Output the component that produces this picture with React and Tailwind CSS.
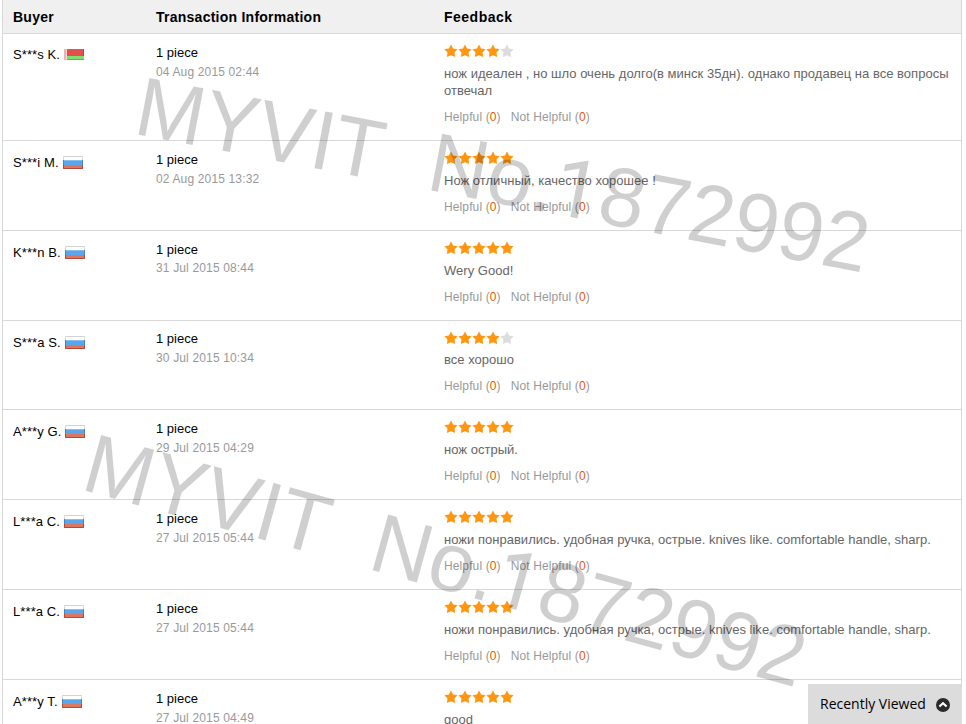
const REVIEWS = [
  { buyer: 'S***s K.', flag: 'by', date: '04 Aug 2015 02:44', stars: 4, lines: ['нож идеален , но шло очень долго(в минск 35дн). однако продавец на все вопросы', 'отвечал'], height: 'h-[107px]', buyerTop: 'mt-[11px]' },
  { buyer: 'S***i M.', flag: 'ru', date: '02 Aug 2015 13:32', stars: 5, lines: ['Нож отличный, качество хорошее !'] },
  { buyer: 'K***n B.', flag: 'ru', date: '31 Jul 2015 08:44', stars: 5, lines: ['Wery Good!'], dateLeading: 'leading-[18px]' },
  { buyer: 'S***a S.', flag: 'ru', date: '30 Jul 2015 10:34', stars: 4, lines: ['все хорошо'], height: 'h-[89px]', tight: true },
  { buyer: 'A***y G.', flag: 'ru', date: '29 Jul 2015 04:29', stars: 5, lines: ['нож острый.'] },
  { buyer: 'L***a C.', flag: 'ru', date: '27 Jul 2015 05:44', stars: 5, lines: ['ножи понравились. удобная ручка, острые. knives like. comfortable handle, sharp.'] },
  { buyer: 'L***a C.', flag: 'ru', date: '27 Jul 2015 05:44', stars: 5, lines: ['ножи понравились. удобная ручка, острые. knives like. comfortable handle, sharp.'] },
  { buyer: 'A***y T.', flag: 'ru', date: '27 Jul 2015 04:49', stars: 5, lines: ['good'] },
];

function Flag({ code }) {
  if (code === 'by') {
    return (
      <svg width="20" height="11" viewBox="0 0 20 11" className="block">
        <rect width="20" height="11" fill="#e0504e" />
        <rect width="20" height="1" fill="#c8605c" />
        <rect y="7" width="20" height="4" fill="#7fe06c" />
        <rect y="10" width="20" height="1" fill="#69ad50" />
        <rect width="3" height="11" fill="#f3dcda" />
        <path d="M1 0V11" stroke="#e58a87" strokeWidth="1" />
        <path d="M19.5 0V7" stroke="#b8453f" />
      </svg>
    );
  }
  return (
    <svg width="20" height="13" viewBox="0 0 20 13" className="block">
      <rect width="20" height="13" fill="#fdfdfd" />
      <rect y="4" width="20" height="5" fill="#5ba5ea" />
      <rect y="4" width="20" height="1" fill="#85c0f2" />
      <rect y="9" width="20" height="4" fill="#dd755f" />
      <path d="M0 .5H20" stroke="#d3d3d3" />
      <path d="M.5 0V4M19.5 0V4" stroke="#dcdcdc" />
      <path d="M.5 4V9M19.5 4V9" stroke="#4683c4" />
      <path d="M.5 9V12.5H19.5V9" fill="none" stroke="#b04a3a" />
    </svg>
  );
}

function Stars({ count }) {
  return (
    <div className="flex h-[14px]">
      {[0, 1, 2, 3, 4].map((i) => (
        <svg key={i} width="14" height="14" viewBox="0 0 14 14">
          <path
            d="M7 .6 9.1 4.6 13.6 5.2 10.5 8.4 11.1 13 7 11.2 2.9 13 3.5 8.4.4 5.2 4.9 4.6Z"
            fill={i < count ? '#ff9610' : '#dcdcdc'}
          />
        </svg>
      ))}
    </div>
  );
}

function Review({ review }) {
  return (
    <div className={`flex shrink-0 border-b border-[#d8d8d8] ${review.height || 'h-[90px]'}`}>
      <div className={`flex h-[19px] w-[143px] items-center gap-[4px] pl-[10px] text-[13px] tracking-[0.1px] text-black ${review.buyerTop || 'mt-[12px]'}`}>
        <span>{review.buyer}</span>
        <Flag code={review.flag} />
      </div>
      <div className={`w-[288px] pl-[10px] ${review.tight ? 'pt-[8px]' : 'pt-[9px]'}`}>
        <div className="h-[19px] text-[13px] leading-[19px] text-black">1 piece</div>
        <div className={`h-[19px] text-[12px] tracking-[0.15px] text-[#999] ${review.dateLeading || 'leading-[20px]'}`}>{review.date}</div>
      </div>
      <div className="pl-[10px] pt-[10px]">
        <Stars count={review.stars} />
        <div className={`text-[13px] leading-[17px] tracking-[0.02px] text-[#666] ${review.tight ? 'mt-[6px]' : 'mt-[7px]'}`}>
          {review.lines.map((line) => (
            <div key={line} className="whitespace-nowrap">{line}</div>
          ))}
        </div>
        <div className="mt-[10px] flex gap-[10px] text-[12px] leading-[17px] tracking-[0.12px] text-[#999]">
          <span>Helpful (<span className="text-[#e65800]">0</span>)</span>
          <span>Not Helpful (<span className="text-[#e65800]">0</span>)</span>
        </div>
      </div>
    </div>
  );
}

function Watermark({ transform }) {
  return (
    <g transform={transform}>
      <text x="0" textLength="251" lengthAdjust="spacingAndGlyphs">MYVIT</text>
      <text x="298" textLength="127.6" lengthAdjust="spacingAndGlyphs">No.</text>
      <text x="424.5" fontSize="82" fontFamily="Roboto, sans-serif">1</text>
      <text x="471.2" textLength="273" lengthAdjust="spacingAndGlyphs">872992</text>
    </g>
  );
}

function Watermarks() {
  return (
    <svg className="pointer-events-none absolute left-0 top-0" width="966" height="724" fill="#000" fillOpacity="0.19" fontSize="84" fontFamily="'Liberation Sans', Arial, sans-serif">
      <Watermark transform="translate(132.1 133.4) rotate(10.8)" />
      <Watermark transform="translate(79.2 488.9) rotate(15.5)" />
    </svg>
  );
}

export default function App() {
  return (
    <div className="relative h-[724px] w-[966px] overflow-hidden bg-white font-['Liberation_Sans',Arial,sans-serif]">
      <div className="ml-[2px] flex h-[724px] w-[960px] flex-col overflow-hidden border-x border-[#d8d8d8]">
        <div className="flex h-[34px] shrink-0 items-center border-b border-[#d8d8d8] bg-[#f0f0f0] pt-[2px] text-[14px] font-bold tracking-[0.25px] text-black">
          <div className="w-[143px] pl-[10px]">Buyer</div>
          <div className="w-[288px] pl-[10px]">Transaction Information</div>
          <div className="pl-[10px] tracking-[0.5px]">Feedback</div>
        </div>
        {REVIEWS.map((review, i) => (
          <Review key={i} review={review} />
        ))}
      </div>
      <Watermarks />
      <div className="absolute bottom-0 left-[808px] flex h-[40px] w-[154px] items-center justify-between bg-[#dcdcdc] pl-[12px] pr-[12px] font-['Open_Sans','Noto_Sans',sans-serif] text-[14px] text-black">
        <span className="mb-[2px] whitespace-nowrap">Recently Viewed</span>
        <svg width="14" height="14" viewBox="0 0 14 14" className="mt-[2px]">
          <circle cx="7" cy="7" r="7" fill="#2b2b2b" />
          <path d="M3.4 8.6 7 5.2l3.6 3.4" fill="none" stroke="#fff" strokeWidth="2" />
        </svg>
      </div>
    </div>
  );
}
